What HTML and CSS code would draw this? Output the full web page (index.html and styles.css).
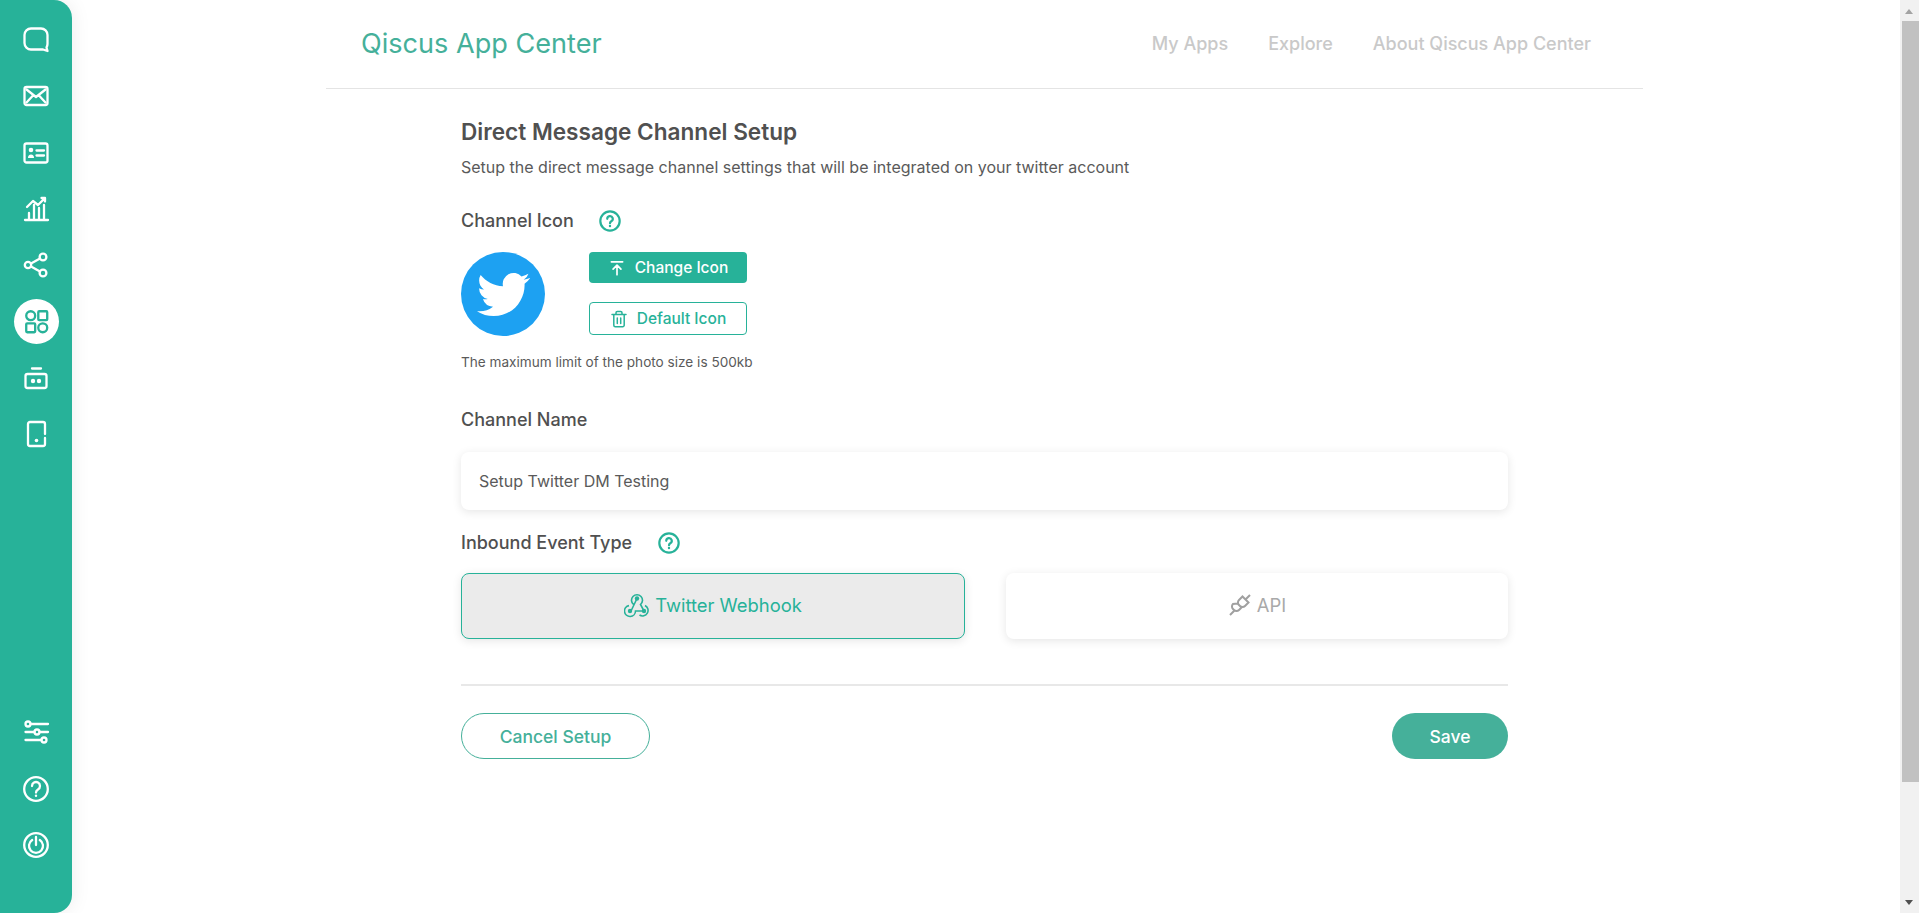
FILE: index.html
```html
<!DOCTYPE html>
<html lang="en">
<head>
    <meta charset="UTF-8">
    <meta name="viewport" content="width=device-width, initial-scale=1.0">
    <title>Qiscus App Center</title>
    <link rel="stylesheet" href="styles.css">
</head>
<body>
    <div class="app">
        <nav class="sidebar">
            <div class="side-group">
                <a class="side-item"><svg class="side-icon" viewBox="0 0 28 28"><path d="M9 2.500h10a6.500 6.500 0 0 1 6.500 6.500v9c0 1.500-.5 2.500-1 3.500l1 3.500-4.500-1.500H9A6.500 6.500 0 0 1 2.500 17V9A6.500 6.500 0 0 1 9 2.500z"/></svg></a>
                <a class="side-item"><svg class="side-icon" viewBox="0 0 28 28"><rect x="2.500" y="5" width="23" height="18" rx="2"/><path d="M4.500 7.500 14 15l9.500-7.500M4.500 20.500l7-7.500M23.500 20.500l-7-7.500"/></svg></a>
                <a class="side-item"><svg class="side-icon" viewBox="0 0 28 28"><rect x="2.500" y="4.500" width="23" height="19" rx="2"/><circle class="solid" cx="9" cy="11" r="2.300"/><path class="solid" d="M6 19c0-2 1-3.500 3-3.500s3 1.500 3 3.500z"/><path d="M14.500 11.500h7.500M14.500 16.500h7.500"/></svg></a>
                <a class="side-item"><svg class="side-icon" viewBox="0 0 28 28"><path d="M3 25h23M7 24v-6M12 24V10M17 24V13M22 24V10M5 12l6-6 5 4 7-7M19.500 3h3.500v3.500"/></svg></a>
                <a class="side-item"><svg class="side-icon" viewBox="0 0 28 28"><circle cx="6" cy="14" r="3.200"/><circle cx="21" cy="6" r="3.400"/><circle cx="21" cy="22" r="3.400"/><path d="M9 12.500 18 7.500M9 15.500 18 20.500"/></svg></a>
                <a class="side-item"><span class="side-active"><svg class="active-icon" viewBox="0 0 28 28"><circle cx="7.500" cy="7.500" r="5"/><rect x="16" y="2.500" width="10" height="10" rx="1"/><rect x="2.500" y="16" width="10" height="10" rx="1"/><circle cx="21" cy="21" r="5"/></svg></span></a>
                <a class="side-item"><svg class="side-icon" viewBox="0 0 28 28"><path d="M10 4.500h9"/><rect x="3.500" y="10" width="21" height="14" rx="2"/><circle class="solid" cx="11" cy="17" r="2.200"/><circle class="solid" cx="17" cy="17" r="2.200"/></svg></a>
                <a class="side-item"><svg class="side-icon" viewBox="0 0 28 28"><path d="M23 18v6a2 2 0 0 1-2 2H8a2 2 0 0 1-2-2V4a2 2 0 0 1 2-2h13a2 2 0 0 1 2 2v10"/><circle class="solid" cx="14.500" cy="20.500" r="1.800"/></svg></a>
            </div>
            <div class="side-group">
                <a class="side-item"><svg class="side-icon" viewBox="0 0 28 28"><path d="M8.500 6H26M3.500 14h9M17.500 14H26M3.500 22h16"/><circle cx="6" cy="6" r="2.500"/><circle cx="15" cy="14" r="2.500"/><circle cx="22" cy="22" r="2.500"/></svg></a>
                <a class="side-item"><svg class="side-icon" viewBox="0 0 28 28"><circle cx="14" cy="14" r="11.800"/><path d="M10 11a4 4 0 1 1 6 3.500c-1.300.8-2 1.500-2 3"/><circle class="solid" cx="14" cy="20.800" r="1.200"/></svg></a>
                <a class="side-item"><svg class="side-icon" viewBox="0 0 28 28"><circle cx="14" cy="14" r="11.800"/><path d="M10.200 9a7 7 0 1 0 7.600 0M14 6v8"/></svg></a>
            </div>
        </nav>

        <main class="main">
            <header class="topbar">
                <div class="brand">Qiscus App Center</div>
                <div class="top-links">
                    <a>My Apps</a>
                    <a>Explore</a>
                    <a>About Qiscus App Center</a>
                </div>
            </header>

            <section class="form">
                <h1>Direct Message Channel Setup</h1>
                <p class="sub">Setup the direct message channel settings that will be integrated on your twitter account</p>

                <div class="label label-icon">
                    Channel Icon
                    <svg class="help" viewBox="0 0 20 20"><circle cx="10" cy="10" r="8.800"/><path d="M7.500 8a2.500 2.500 0 1 1 3.700 2.200c-.8.500-1.200 1-1.200 1.800"/><circle class="dot" cx="10" cy="14.500" r="1.100"/></svg>
                </div>

                <div class="icon-row">
                    <div class="avatar">
                        <svg viewBox="0 0 24 24"><path d="M23.953 4.570a10 10 0 0 1-2.825.775 4.958 4.958 0 0 0 2.163-2.723c-.951.555-2.005.959-3.127 1.184a4.920 4.920 0 0 0-8.384 4.482C7.690 8.095 4.067 6.130 1.640 3.162a4.822 4.822 0 0 0-.666 2.475c0 1.710.870 3.213 2.188 4.096a4.904 4.904 0 0 1-2.228-.616v.060a4.923 4.923 0 0 0 3.946 4.827 4.996 4.996 0 0 1-2.212.085 4.936 4.936 0 0 0 4.604 3.417 9.867 9.867 0 0 1-6.102 2.105c-.390 0-.779-.023-1.170-.067a13.995 13.995 0 0 0 7.557 2.209c9.053 0 13.998-7.496 13.998-13.985 0-.210 0-.420-.015-.630A9.935 9.935 0 0 0 24 4.590z"/></svg>
                    </div>
                    <div class="icon-btns">
                        <button class="btn-change"><svg viewBox="0 0 16 16"><path d="M3 2.500h10M8 14V5.500M4.500 9 8 5.500 11.500 9"/></svg>Change Icon</button>
                        <button class="btn-default"><svg viewBox="0 0 16 18"><path d="M1 4.500h14M5 4.500V2.800A1.300 1.300 0 0 1 6.300 1.500h3.400A1.300 1.300 0 0 1 11 2.800v1.700M2.800 4.500v10.700a1.500 1.500 0 0 0 1.500 1.500h7.400a1.500 1.500 0 0 0 1.500-1.500V4.500M6.300 8v5.500M9.700 8v5.500"/></svg>Default Icon</button>
                    </div>
                </div>
                <p class="note">The maximum limit of the photo size is 500kb</p>

                <div class="label label-name">Channel Name</div>
                <div class="input">Setup Twitter DM Testing</div>

                <div class="label label-type">
                    Inbound Event Type
                    <svg class="help help-type" viewBox="0 0 20 20"><circle cx="10" cy="10" r="8.800"/><path d="M7.500 8a2.500 2.500 0 1 1 3.700 2.200c-.8.500-1.200 1-1.200 1.800"/><circle class="dot" cx="10" cy="14.500" r="1.100"/></svg>
                </div>

                <div class="type-row">
                    <div class="type-card selected">
                        <svg viewBox="0 0 26 26"><circle class="dot" cx="13" cy="6.500" r="2.200"/><circle class="dot" cx="6" cy="19" r="2.200"/><circle class="dot" cx="20" cy="19" r="2.200"/><path d="M9.500 12.500a5.500 5.500 0 1 1 7 0L20 19M13 6.500l-6 12.500M5 13.600a5.500 5.500 0 1 0 6.500 5.400H20M15.500 23a5.500 5.500 0 1 0 5.500-9.500"/></svg>
                        Twitter Webhook
                    </div>
                    <div class="type-card">
                        <svg viewBox="0 0 24 24"><path d="M22 2l-4 4M2 22l4-4M14.500 3.500l6 6-3.500 3.500a3.500 3.500 0 0 1-5 0l-1-1a3.500 3.500 0 0 1 0-5zM9.500 10.500l4 4-2.500 2.500a3.500 3.500 0 0 1-5 0l-1-1a3.500 3.500 0 0 1 0-5z"/></svg>
                        API
                    </div>
                </div>

                <div class="actions">
                    <button class="btn-cancel">Cancel Setup</button>
                    <button class="btn-save">Save</button>
                </div>
            </section>
        </main>

        <div class="scrollbar">
            <span class="arrow-up"></span>
            <div class="thumb"></div>
            <span class="arrow-down"></span>
        </div>
    </div>
</body>
</html>
```

FILE: styles.css
```css
body {
    font-family: Inter, "Noto Sans", sans-serif;
    margin: 0;
    background-color: white;
    color: #505050;
    overflow: hidden;
}
.app {
    display: flex;
    height: 100vh;
}

/* sidebar */
.sidebar {
    width: 72px;
    flex-shrink: 0;
    display: flex;
    flex-direction: column;
    justify-content: space-between;
    box-sizing: border-box;
    padding: 12px 0 40px;
    background-color: #27b299;
    border-radius: 0 18px 18px 0;
    box-shadow: 0 0 20px rgba(0,0,0,0.08);
}
.side-item {
    display: flex;
    align-items: center;
    justify-content: center;
    height: 56.3px;
}
.side-icon {
    width: 28px;
    height: 28px;
    fill: none;
    stroke: white;
    stroke-width: 2.300;
    stroke-linecap: round;
    stroke-linejoin: round;
}
.side-icon .solid {
    fill: white;
    stroke: none;
}
.side-active {
    display: flex;
    align-items: center;
    justify-content: center;
    width: 45px;
    height: 45px;
    border-radius: 50%;
    background-color: white;
}
.active-icon {
    width: 25px;
    height: 25px;
    fill: none;
    stroke: #27b299;
    stroke-width: 2.600;
}

/* top bar */
.main {
    flex: 1;
    min-width: 0;
}
.topbar {
    width: 1317px;
    height: 89px;
    margin-left: 254px;
    box-sizing: border-box;
    padding: 0 52px 2px 35px;
    display: flex;
    align-items: center;
    justify-content: space-between;
    border-bottom: 1px solid #e4e4e4;
}
.brand {
    font-size: 27.1px;
    color: #45b09a;
}
.top-links {
    display: flex;
    gap: 40px;
    font-size: 18px;
    font-weight: 500;
    color: #c9c9c9;
}

/* form */
.form {
    width: 1047px;
    margin-left: 389px;
    padding-top: 30px;
}
h1 {
    margin: 0;
    font-size: 22.6px;
    line-height: 26px;
    font-weight: 600;
}
.sub {
    margin: 12px 0 0;
    font-size: 16px;
    line-height: 20px;
    color: #5a5a5a;
}
.label {
    display: flex;
    align-items: center;
    font-size: 18px;
    line-height: 22px;
    font-weight: 500;
}
.label-icon {
    margin-top: 33px;
}
.label-name {
    margin-top: 39px;
}
.label-type {
    margin-top: 22px;
}
.help {
    width: 22px;
    height: 22px;
    margin-left: 25px;
    fill: none;
    stroke: #27b299;
    stroke-width: 2;
    stroke-linecap: round;
}
.help-type {
    margin-left: 26px;
}
.help .dot {
    fill: #27b299;
    stroke: none;
}
.icon-row {
    display: flex;
    gap: 44px;
    margin-top: 20px;
}
.avatar {
    width: 84px;
    height: 84px;
    border-radius: 50%;
    background-color: #1da1f2;
    display: flex;
    align-items: center;
    justify-content: center;
}
.avatar svg {
    width: 53px;
    height: 53px;
    fill: white;
}
.icon-btns {
    display: flex;
    flex-direction: column;
    justify-content: space-between;
    width: 158px;
    height: 83px;
}
.icon-btns button {
    display: flex;
    align-items: center;
    justify-content: center;
    gap: 9px;
    font-family: inherit;
    font-size: 15.5px;
    font-weight: 500;
    border-radius: 4px;
    padding: 0;
}
.icon-btns svg {
    width: 18px;
    height: 18px;
    fill: none;
    stroke: currentColor;
    stroke-width: 1.5;
    stroke-linecap: round;
    stroke-linejoin: round;
}
.btn-change {
    height: 31px;
    color: white;
    background-color: #27b299;
    border: none;
}
.btn-default {
    height: 33px;
    color: #27b299;
    background-color: white;
    border: 1px solid #27b299;
}
.note {
    margin: 18px 0 0;
    font-size: 13.6px;
    line-height: 16px;
    color: #5a5a5a;
}
.input {
    height: 58px;
    margin-top: 21px;
    box-sizing: border-box;
    padding: 0 18px;
    display: flex;
    align-items: center;
    font-size: 16px;
    color: #5a5a5a;
    border-radius: 8px;
    background-color: white;
    box-shadow: 0 2px 10px rgba(0,0,0,0.1);
}
.type-row {
    display: flex;
    gap: 41px;
    margin-top: 19px;
}
.type-card {
    flex: 1;
    height: 66px;
    box-sizing: border-box;
    padding-bottom: 2px;
    display: flex;
    align-items: center;
    justify-content: center;
    gap: 5px;
    font-size: 18.4px;
    color: #a9a9a9;
    border-radius: 8px;
    background-color: white;
    box-shadow: 0 2px 10px rgba(0,0,0,0.1);
}
.type-card svg {
    width: 24px;
    height: 24px;
    fill: none;
    stroke: #a0a0a0;
    stroke-width: 2;
}
.type-card.selected {
    color: #27b299;
    background-color: #ebebeb;
    border: 1px solid #27b299;
}
.type-card.selected svg {
    width: 26px;
    height: 26px;
    stroke: #27b299;
    stroke-width: 1.600;
}
.type-card.selected .dot {
    fill: #27b299;
    stroke: none;
}
.actions {
    display: flex;
    justify-content: space-between;
    margin-top: 45px;
    padding-top: 27px;
    border-top: 2px solid #e8e8e8;
}
.actions button {
    height: 46px;
    font-family: inherit;
    font-size: 17.5px;
    font-weight: 500;
    border-radius: 23px;
}
.btn-cancel {
    width: 189px;
    color: #45b09a;
    background-color: white;
    border: 1px solid #45b09a;
}
.btn-save {
    width: 116px;
    margin-left: auto;
    color: white;
    background-color: #45b09a;
    border: none;
}

/* page scrollbar */
.scrollbar {
    width: 19px;
    flex-shrink: 0;
    display: flex;
    flex-direction: column;
    background-color: #f1f1f1;
}
.thumb {
    height: 761px;
    margin: 7px 0 0 2px;
    background-color: #c1c1c1;
}
.arrow-up {
    width: 0;
    margin: 9px 0 0 5px;
    border-left: 4.500px solid transparent;
    border-right: 4.500px solid transparent;
    border-bottom: 5px solid #a3a3a3;
}
.arrow-down {
    width: 0;
    margin: auto 0 8px 5px;
    border-left: 4.500px solid transparent;
    border-right: 4.500px solid transparent;
    border-top: 5px solid #505050;
}
```
